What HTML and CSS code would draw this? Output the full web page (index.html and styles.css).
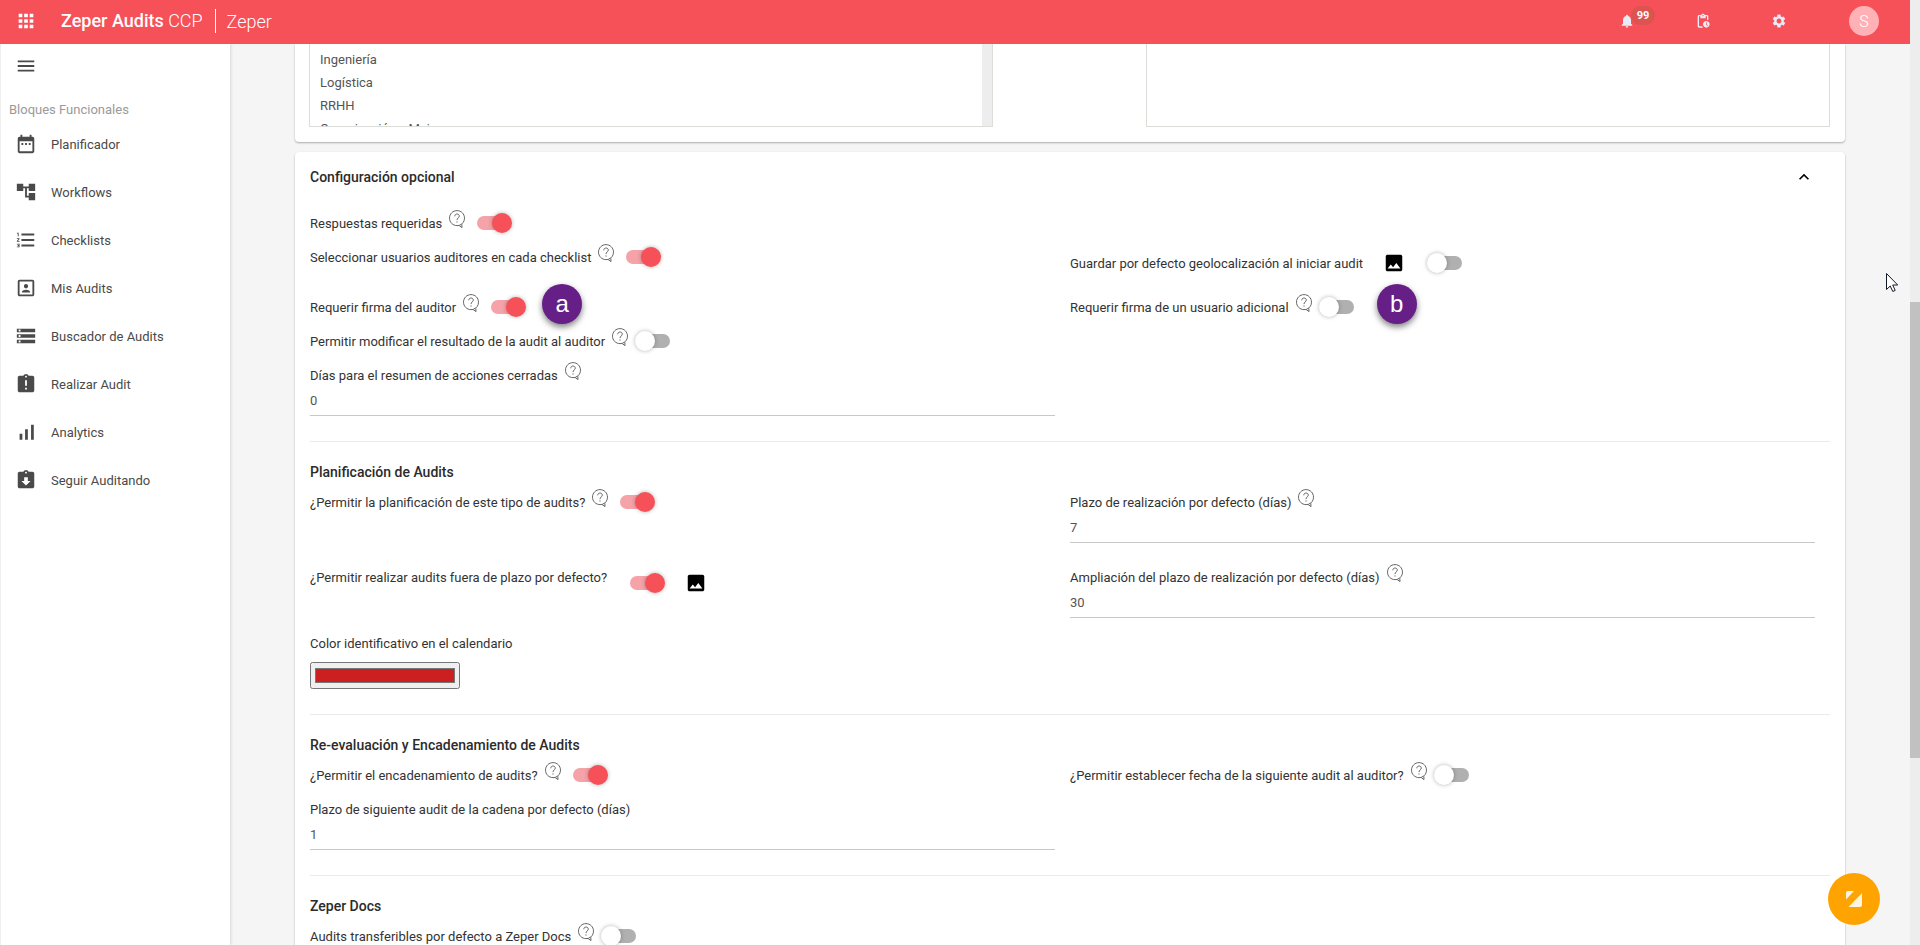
FILE: index.html
```
<!DOCTYPE html>
<html lang="es">
<head>
  <meta charset="UTF-8" />
  <title>Zeper Audits CCP</title>
  <meta name="viewport" content="width=device-width, initial-scale=1" />
  <link rel="stylesheet" href="styles.css">
</head>
<body>

  <!-- shared icons -->
  <svg class="sprite" aria-hidden="true">
    <symbol id="icon-help" viewBox="0 0 16 18">
      <path d="M10.4 15.2C13.6 14.200 15.500 11.400 15.500 8.200C15.500 3.900 12.200.6 8 .6S.5 3.900.5 8.100s3.300 7.500 7.500 7.500c.8 0 1.300 0 2-.2l3 2.200-.2-3.400" fill="none" stroke="currentColor" stroke-width=".9"/>
      <path d="M5.800 6.300C5.800 4.800 6.800 4 8 4s2.300.8 2.300 2.100C10.300 7.900 8 7.900 8 10.100M8 11.400v1.200" fill="none" stroke="currentColor" stroke-width=".9"/>
    </symbol>
    <symbol id="icon-image" viewBox="0 0 24 24">
      <path d="M21 19V5c0-1.100-.9-2-2-2H5c-1.100 0-2 .9-2 2v14c0 1.100.9 2 2 2h14c1.100 0 2-.9 2-2zM8.500 13.500l2.500 3L14.500 12l4.500 6H5l3.500-4.500z"/>
    </symbol>
  </svg>

  <div class="app">
    <header class="topbar">
      <button type="button" class="icon-btn apps" aria-label="Aplicaciones">
        <svg viewBox="0 0 24 24"><path d="M4 8h4V4H4v4zm6 12h4v-4h-4v4zm-6 0h4v-4H4v4zm0-6h4v-4H4v4zm6 0h4v-4h-4v4zm6-10v4h4V4h-4zm-6 4h4V4h-4v4zm6 6h4v-4h-4v4zm0 6h4v-4h-4v4z"/></svg>
      </button>
      <div class="brand"><b>Zeper Audits</b> CCP</div>
      <div class="company">Zeper</div>
      <nav class="actions">
        <button type="button" class="icon-btn" aria-label="Notificaciones">
          <svg viewBox="0 0 24 24"><path d="M12 22c1.100 0 2-.9 2-2h-4c0 1.100.89 2 2 2zm6-6v-5c0-3.070-1.640-5.640-4.500-6.320V4c0-.83-.67-1.500-1.500-1.500s-1.500.67-1.500 1.500v.68C7.630 5.360 6 7.920 6 11v5l-2 2v1h16v-1l-2-2z"/></svg>
          <span class="count">99</span>
        </button>
        <button type="button" class="icon-btn" aria-label="Pendientes">
          <svg viewBox="0 0 24 24"><path d="M17 12c-2.760 0-5 2.240-5 5s2.240 5 5 5 5-2.240 5-5-2.240-5-5-5zm1.650 7.350L16.500 17.200V14h1v2.790l1.850 1.850-.7.71zM18 3h-3.180C14.400 1.840 13.300 1 12 1s-2.400.84-2.820 2H6c-1.100 0-2 .9-2 2v15c0 1.100.9 2 2 2h6.110c-.59-.57-1.070-1.250-1.420-2H6V5h2v3h8V5h2v5.080c.71.1 1.380.31 2 .6V5c0-1.100-.9-2-2-2zm-6 2c-.55 0-1-.45-1-1s.45-1 1-1 1 .45 1 1-.45 1-1 1z"/></svg>
        </button>
        <button type="button" class="icon-btn" aria-label="Ajustes">
          <svg viewBox="0 0 24 24"><path d="M19.140 12.940c.04-.3.06-.61.06-.94 0-.32-.02-.64-.07-.94l2.030-1.580c.18-.14.23-.41.12-.61l-1.920-3.320c-.12-.22-.37-.29-.59-.22l-2.390.96c-.5-.38-1.030-.7-1.620-.94l-.36-2.540c-.04-.24-.24-.41-.48-.41h-3.840c-.24 0-.43.17-.47.41l-.36 2.540c-.59.24-1.130.57-1.620.94l-2.390-.96c-.22-.08-.47 0-.59.22L2.740 8.870c-.12.21-.08.47.12.61l2.030 1.580c-.05.3-.09.63-.09.94s.02.64.07.94l-2.030 1.580c-.18.14-.23.41-.12.61l1.920 3.320c.12.22.37.29.59.22l2.390-.96c.5.38 1.030.7 1.620.94l.36 2.540c.05.24.24.41.48.41h3.840c.24 0 .44-.17.47-.41l.36-2.540c.59-.24 1.130-.56 1.620-.94l2.390.96c.22.08.47 0 .59-.22l1.920-3.320c.12-.22.07-.47-.12-.61l-2.010-1.580zM12 15.600c-1.980 0-3.600-1.620-3.600-3.600s1.620-3.600 3.600-3.600 3.600 1.620 3.600 3.600-1.620 3.600-3.600 3.600z"/></svg>
        </button>
        <button type="button" class="avatar">S</button>
      </nav>
    </header>

    <aside class="sidebar">
      <button type="button" class="menu-btn" aria-label="Menú">
        <svg viewBox="0 0 24 24"><path d="M3 18h18v-2H3v2zm0-5h18v-2H3v2zm0-7v2h18V6H3z"/></svg>
      </button>
      <p class="menu-title">Bloques Funcionales</p>
      <nav class="menu">
        <a href="#"><svg viewBox="0 0 24 24"><path d="M9 11H7v2h2v-2zm4 0h-2v2h2v-2zm4 0h-2v2h2v-2zm2-7h-1V2h-2v2H8V2H6v2H5c-1.110 0-1.990.9-1.990 2L3 20c0 1.100.89 2 2 2h14c1.100 0 2-.9 2-2V6c0-1.100-.9-2-2-2zm0 16H5V9h14v11z"/></svg>Planificador</a>
        <a href="#"><svg viewBox="0 0 24 24"><path d="M22 11V3h-7v3H9V3H2v8h7V8h2v10h4v3h7v-8h-7v3h-2V8h2v3z"/></svg>Workflows</a>
        <a href="#"><svg viewBox="0 0 24 24"><path d="M2 17h2v.5H3v1h1v.5H2v1h3v-4H2v1zm1-9h1V4H2v1h1v3zm-1 3h1.800L2 13.100v.9h3v-1H3.200L5 10.900V10H2v1zm5-6v2h14V5H7zm0 14h14v-2H7v2zm0-6h14v-2H7v2z"/></svg>Checklists</a>
        <a href="#"><svg viewBox="0 0 24 24"><path d="M12 12.250c1.240 0 2.250-1.010 2.250-2.250S13.240 7.750 12 7.750 9.750 8.760 9.750 10s1.010 2.250 2.250 2.250zm4.500 4c0-1.500-3-2.250-4.500-2.250s-4.500.75-4.500 2.250V17h9v-.75zM19 3H5c-1.100 0-2 .9-2 2v14c0 1.100.9 2 2 2h14c1.100 0 2-.9 2-2V5c0-1.100-.9-2-2-2zm0 16H5V5h14v14z"/></svg>Mis Audits</a>
        <a href="#"><svg viewBox="0 0 24 24"><path d="M2 20h20v-4H2v4zm2-3h2v2H4v-2zM2 4v4h20V4H2zm4 3H4V5h2v2zm-4 7h20v-4H2v4zm2-3h2v2H4v-2z"/></svg>Buscador de Audits</a>
        <a href="#"><svg viewBox="0 0 24 24"><path d="M19 3h-4.180C14.400 1.840 13.300 1 12 1c-1.300 0-2.400.84-2.820 2H5c-1.100 0-2 .9-2 2v14c0 1.100.9 2 2 2h14c1.100 0 2-.9 2-2V5c0-1.100-.9-2-2-2zm-6 15h-2v-2h2v2zm0-4h-2V8h2v6zm-1-9c-.55 0-1-.45-1-1s.45-1 1-1 1 .45 1 1-.45 1-1 1z"/></svg>Realizar Audit</a>
        <a href="#"><svg viewBox="0 0 24 24"><path d="M5 14h3v6.500H5zM11 9h3v11.500h-3zM17.500 4h3v16.500h-3z"/></svg>Analytics</a>
        <a href="#"><svg viewBox="0 0 24 24"><path d="M19 3h-4.180C14.400 1.840 13.300 1 12 1c-1.300 0-2.400.84-2.820 2H5c-1.100 0-2 .9-2 2v14c0 1.100.9 2 2 2h14c1.100 0 2-.9 2-2V5c0-1.100-.9-2-2-2zm-7 0c.55 0 1 .45 1 1s-.45 1-1 1-1-.45-1-1 .45-1 1-1zm0 15l-5-5h3V9h4v4h3l-5 5z"/></svg>Seguir Auditando</a>
      </nav>
    </aside>

    <main class="content">
      <section class="card card-lists">
        <div class="list-box">
          <ul class="list">
            <li>Ingeniería</li>
            <li>Logística</li>
            <li>RRHH</li>
            <li>Organización y Mejora</li>
          </ul>
        </div>
        <div class="list-box"></div>
      </section>

      <section class="card card-config">
        <div class="card-head">
          <h2>Configuración opcional</h2>
          <button type="button" class="collapse" aria-label="Contraer">
            <svg viewBox="0 0 24 24"><path d="M12 8l-6 6 1.400 1.400L12 10.800l4.600 4.600L18 14z"/></svg>
          </button>
        </div>

        <form>
          <div class="grid">
            <div class="field">
              <label for="respuestas">Respuestas requeridas</label>
              <svg class="help"><use href="#icon-help"/></svg>
              <input type="checkbox" class="switch" id="respuestas" checked />
            </div>
            <div></div>

            <div class="field">
              <label for="auditores">Seleccionar usuarios auditores en cada checklist</label>
              <svg class="help"><use href="#icon-help"/></svg>
              <input type="checkbox" class="switch" id="auditores" checked />
            </div>
            <div class="field tall">
              <label for="geo">Guardar por defecto geolocalización al iniciar audit</label>
              <svg class="image"><use href="#icon-image"/></svg>
              <input type="checkbox" class="switch wide" id="geo" />
            </div>

            <div class="field">
              <label for="firmaAuditor">Requerir firma del auditor</label>
              <svg class="help"><use href="#icon-help"/></svg>
              <input type="checkbox" class="switch" id="firmaAuditor" checked />
              <span class="marker">a</span>
            </div>
            <div class="field">
              <label for="firmaUsuario">Requerir firma de un usuario adicional</label>
              <svg class="help"><use href="#icon-help"/></svg>
              <input type="checkbox" class="switch" id="firmaUsuario" />
              <span class="marker marker-far">b</span>
            </div>

            <div class="field">
              <label for="modificar">Permitir modificar el resultado de la audit al auditor</label>
              <svg class="help"><use href="#icon-help"/></svg>
              <input type="checkbox" class="switch" id="modificar" />
            </div>
            <div></div>

            <div>
              <div class="field">
                <label for="diasResumen">Días para el resumen de acciones cerradas</label>
                <svg class="help"><use href="#icon-help"/></svg>
              </div>
              <input type="text" class="text-input" id="diasResumen" value="0" />
            </div>
          </div>

          <hr>
          <h3>Planificación de Audits</h3>
          <div class="grid spaced">
            <div class="field">
              <label for="planificacion">¿Permitir la planificación de este tipo de audits?</label>
              <svg class="help"><use href="#icon-help"/></svg>
              <input type="checkbox" class="switch" id="planificacion" checked />
            </div>
            <div>
              <div class="field">
                <label for="plazo">Plazo de realización por defecto (días)</label>
                <svg class="help"><use href="#icon-help"/></svg>
              </div>
              <input type="text" class="text-input" id="plazo" value="7" />
            </div>

            <div class="field">
              <label for="fueraPlazo">¿Permitir realizar audits fuera de plazo por defecto?</label>
              <input type="checkbox" class="switch wide low" id="fueraPlazo" checked />
              <svg class="image low"><use href="#icon-image"/></svg>
            </div>
            <div>
              <div class="field">
                <label for="ampliacion">Ampliación del plazo de realización por defecto (días)</label>
                <svg class="help"><use href="#icon-help"/></svg>
              </div>
              <input type="text" class="text-input" id="ampliacion" value="30" />
            </div>
          </div>
          <div class="color-field">
            <div class="field">
              <label for="color">Color identificativo en el calendario</label>
            </div>
            <input type="color" class="color-input" id="color" value="#cc2020" />
          </div>

          <hr>
          <h3>Re-evaluación y Encadenamiento de Audits</h3>
          <div class="grid">
            <div class="field">
              <label for="encadenamiento">¿Permitir el encadenamiento de audits?</label>
              <svg class="help"><use href="#icon-help"/></svg>
              <input type="checkbox" class="switch" id="encadenamiento" checked />
            </div>
            <div class="field">
              <label for="fechaSiguiente">¿Permitir establecer fecha de la siguiente audit al auditor?</label>
              <svg class="help"><use href="#icon-help"/></svg>
              <input type="checkbox" class="switch" id="fechaSiguiente" />
            </div>
            <div>
              <div class="field">
                <label for="plazoCadena">Plazo de siguiente audit de la cadena por defecto (días)</label>
              </div>
              <input type="text" class="text-input" id="plazoCadena" value="1" />
            </div>
          </div>

          <hr>
          <h3>Zeper Docs</h3>
          <div class="grid">
            <div class="field">
              <label for="docs">Audits transferibles por defecto a Zeper Docs</label>
              <svg class="help"><use href="#icon-help"/></svg>
              <input type="checkbox" class="switch" id="docs" />
            </div>
          </div>
        </form>
      </section>
    </main>
  </div>

  <div class="scrollbar"><div class="scroll-thumb"></div></div>

  <button type="button" class="fab" aria-label="Zeper">
    <svg viewBox="0 0 16 16"><path d="M1.500 0H8L0 8.500v-7Q0 0 1.500 0zM16 2v12q0 2-2 2H2.500z"/></svg>
  </button>

  <svg class="cursor" viewBox="0 0 12 19"><path d="M.5.500v16l3.700-3.500 2.600 5.500 2.400-1.100L6.700 12h5z" fill="#fff" stroke="#111827"/></svg>

</body>
</html>
```

FILE: styles.css
```
* { box-sizing: border-box; }
html, body {
  margin: 0; padding: 0;
  height: 100%; overflow: hidden;
}
body {
  display: flex;
  background: #f5f5f5;
  font-family: Roboto, sans-serif;
  font-size: 13px; color: #333;
}
button {
  margin: 0; padding: 0;
  border: none; background: none;
  font-family: inherit; cursor: pointer;
}
svg { display: block; fill: currentColor; flex: none; }
.sprite { position: absolute; width: 0; height: 0; }

.app {
  flex: 1; min-width: 0; height: 100vh;
  display: grid;
  grid-template-columns: 230px 1fr;
  grid-template-rows: 44px 1fr;
}

/* top bar */
.topbar {
  grid-column: 1 / 3;
  display: flex; align-items: center;
  padding: 0 31px 2px 15px;
  background: #f65058; color: #fff;
  font-size: 18px; font-weight: 300;
  z-index: 2;
}
.icon-btn {
  position: relative; color: #e8eaf6;
  display: flex; align-items: center;
}
.icon-btn svg { width: 16px; height: 16px; }
.apps { color: #fff; }
.apps svg { width: 22px; height: 22px; }
.brand { margin-left: 24px; padding-right: 12px; line-height: 24px; border-right: 1px solid #fff; }
.brand b { font-weight: 500; }
.company { margin-left: 11px; }
.actions {
  margin-left: auto;
  display: flex; align-items: center; gap: 60px;
}
.count {
  position: absolute; left: 12px; top: -15px;
  width: 24px; height: 19px; line-height: 19px;
  border-radius: 10px;
  background: rgba(180, 90, 70, 0.4);
  color: #fff; font-size: 11px; font-weight: 700;
  text-align: center;
}
.icon-btn .count { top: -7px; }
.avatar {
  width: 30px; height: 30px; border-radius: 50%;
  background: #ffb1b5; color: #fff;
  font-size: 16px; font-weight: 300;
  margin-left: 2px;
}

/* sidebar */
.sidebar {
  background: #fff; color: #4a4a4a;
  border-left: 1px solid #eee;
  box-shadow: 1px 0 3px rgba(0, 0, 0, 0.12);
}
.sidebar svg { width: 22px; height: 22px; }
.menu-btn { display: block; margin: 11px 14px; color: #4a4a4a; }
.menu-title { margin: 23px 8px 0; line-height: 20px; color: #9a9a9a; }
.menu a {
  display: flex; align-items: center; gap: 14px;
  height: 48px; padding-left: 14px;
  color: inherit; text-decoration: none;
}

/* content */
.content {
  display: flex; flex-direction: column; gap: 10px;
  padding: 0 65px; overflow: hidden;
}
.card {
  flex: none; background: #fff; border-radius: 4px;
  padding: 0 15px 15px;
  box-shadow: 0 1px 2px rgba(0, 0, 0, 0.3);
}
.card-lists {
  display: flex; justify-content: space-between;
  padding-left: 14px;
  border-radius: 0 0 4px 4px;
}
.list-box {
  width: 45%; height: 83px; overflow: hidden;
  border: 1px solid #dcdcd8; border-top: none;
}
.list {
  margin: 0; padding: 4px 10px; list-style: none;
  line-height: 23px; color: #555;
  border-right: 10px solid #ededed;
}
.card-head {
  display: flex; align-items: center; justify-content: space-between;
  height: 50px; margin-bottom: 4px; padding-right: 16px;
}
.collapse svg { width: 20px; height: 20px; }
h2, h3 {
  margin: 0; font-size: 14px; font-weight: 500;
  line-height: 20px; color: #2b2b2b;
}
h3 { margin: 20px 0 3px; }
hr { margin: 25px 0 0; border: none; border-top: 1px solid #eaeaea; }

/* form */
.grid {
  display: grid; grid-template-columns: 1fr 1fr;
  column-gap: 15px; padding-right: 15px;
}
.spaced { row-gap: 17px; }
.field {
  display: flex; align-items: center;
  height: 34px;
}
.tall { height: 50px; padding-bottom: 4px; }
.help { width: 16px; height: 18px; margin: 0 0 8px 7px; color: #555; }
.image { width: 22px; height: 22px; margin-left: 20px; color: #000; }
.switch {
  appearance: none; position: relative; flex: none;
  width: 36px; height: 20px;
  margin: 0 0 0 7px;
}
.switch:checked { margin-left: 11px; }
.switch::before {
  content: ""; position: absolute;
  left: 1px; top: 3px; width: 34px; height: 14px;
  border-radius: 7px; background: #b0b0b0;
}
.switch::after {
  content: ""; position: absolute;
  left: 0; top: 0; width: 20px; height: 20px;
  border-radius: 50%; background: #fff;
  box-shadow: 0 0 4px rgba(0, 0, 0, 0.3);
}
.switch:checked::before { background: #f5a3a8; }
.switch:checked::after { left: 16px; background: #f65058; }
.switch.wide { margin-left: 22px; }
.switch.low, .image.low { margin-top: 12px; }
.marker {
  width: 40px; height: 40px; border-radius: 50%;
  margin: -8px 0 -2px 16px;
  background: #651f87; color: #fff;
  font: 24px/40px "Liberation Sans", sans-serif;
  text-align: center;
  box-shadow: 0 3px 6px rgba(0, 0, 0, 0.5);
}
.marker-far { margin-left: 22px; }
.text-input {
  display: block; width: 100%; height: 24px;
  padding: 0 0 7px; border: none;
  border-bottom: 1px solid #c8c8c8;
  background: none; color: #555;
  font: 13px Roboto, sans-serif;
}
.color-field { margin-top: 8px; }
.color-input { display: block; width: 150px; height: 27px; margin-top: 2px; }

/* page scrollbar and floating items */
.scrollbar { width: 10px; padding-top: 302px; background: #ededed; }
.scroll-thumb { height: 456px; background: #c1c1c1; }
.fab {
  position: fixed; right: 40px; bottom: 20px;
  width: 52px; height: 52px; border-radius: 50%;
  background: #ffa300; color: #fff4e0;
  display: flex; align-items: center; justify-content: center;
}
.fab svg { width: 16px; height: 16px; }
.cursor { position: fixed; left: 98%; top: 273px; margin-left: 4px; width: 12px; height: 19px; }
```
